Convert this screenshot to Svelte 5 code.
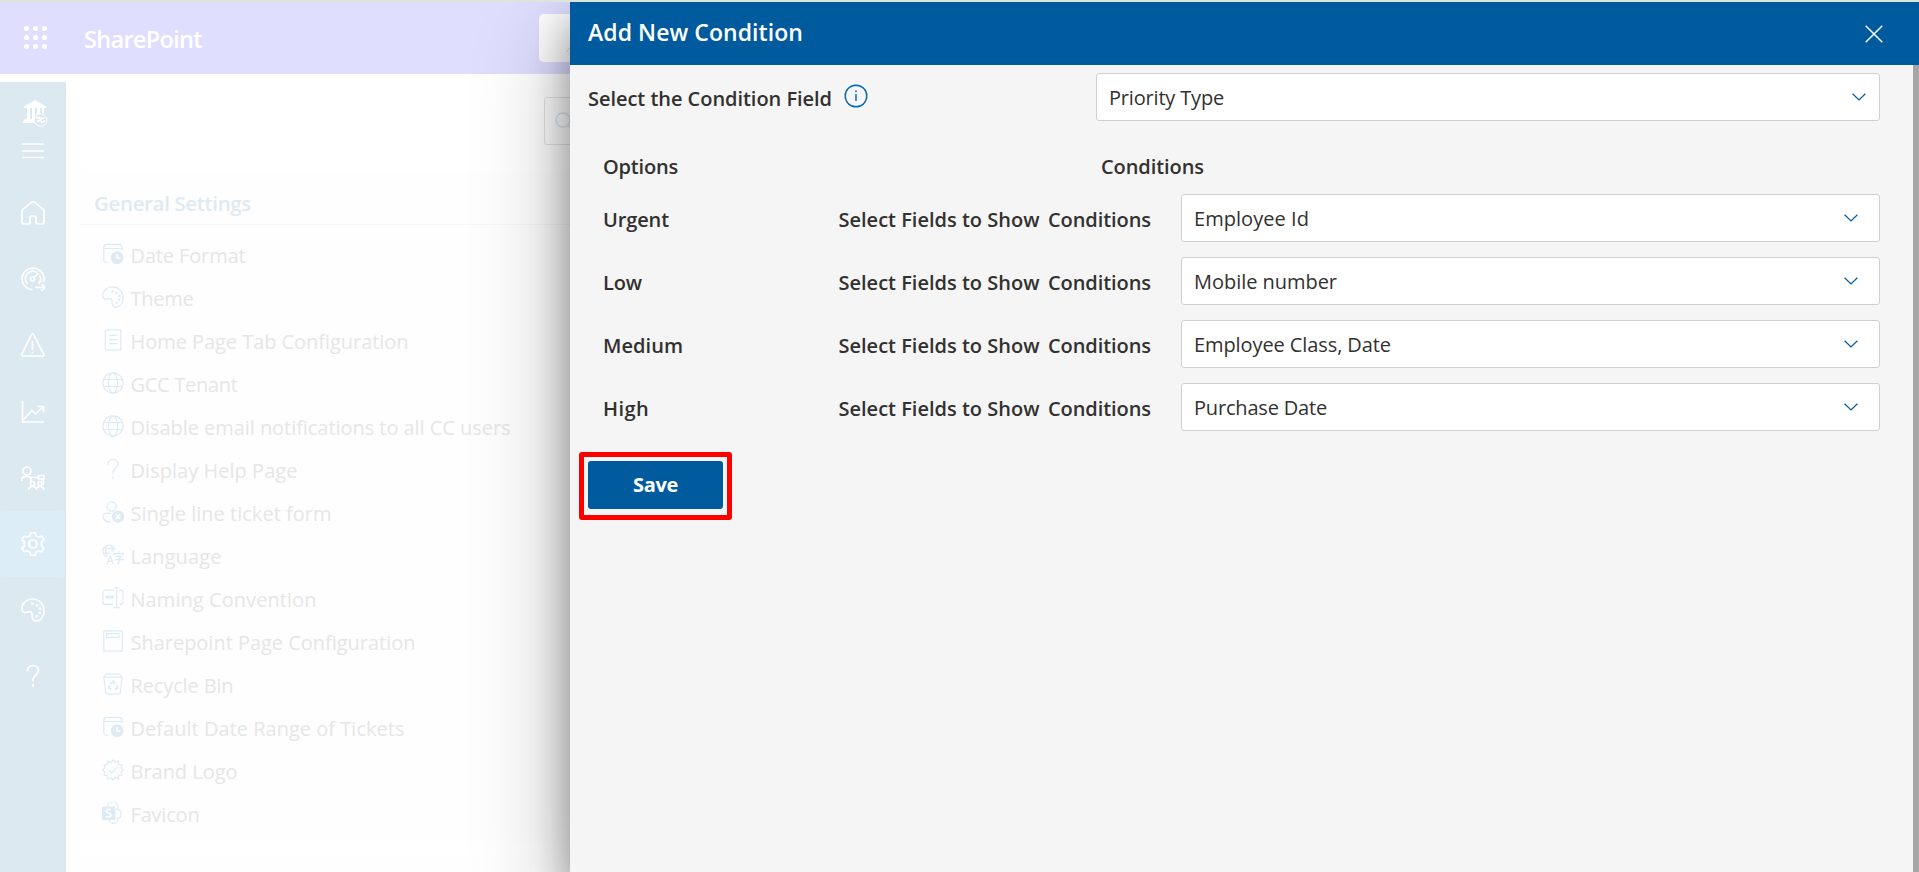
<script>
  function fit(node, width) {
    const chars = node.textContent.length;
    const natural = node.getBoundingClientRect().width;
    node.style.letterSpacing = `${(width - natural) / chars}px`;
  }

  const nav = ['home', 'gauge', 'alert', 'chart', 'people', 'gear', 'palette', 'help'];

  const settings = [
    { icon: 'date', label: 'Date Format', width: 115 },
    { icon: 'palette', label: 'Theme', width: 63 },
    { icon: 'doc', label: 'Home Page Tab Configuration', width: 278 },
    { icon: 'globe', label: 'GCC Tenant', width: 107 },
    { icon: 'globe', label: 'Disable email notifications to all CC users', width: 380 },
    { icon: 'help', label: 'Display Help Page', width: 167 },
    { icon: 'userx', label: 'Single line ticket form', width: 201 },
    { icon: 'lang', label: 'Language', width: 91 },
    { icon: 'rename', label: 'Naming Convention', width: 186 },
    { icon: 'page', label: 'Sharepoint Page Configuration', width: 285 },
    { icon: 'bin', label: 'Recycle Bin', width: 103 },
    { icon: 'date', label: 'Default Date Range of Tickets', width: 274 },
    { icon: 'badge', label: 'Brand Logo', width: 107 },
    { icon: 'sp', label: 'Favicon', width: 69 }
  ];

  const rows = [
    { name: 'Urgent', nw: 66, value: 'Employee Id', vw: 115 },
    { name: 'Low', nw: 39, value: 'Mobile number', vw: 143 },
    { name: 'Medium', nw: 80, value: 'Employee Class, Date', vw: 197 },
    { name: 'High', nw: 46, value: 'Purchase Date', vw: 133 }
  ];
</script>

{#snippet icon(name, size, stroke)}
  <svg class="icon" width={size} height={size} viewBox="0 0 24 24" fill="none" stroke="currentColor" stroke-width={stroke} stroke-linejoin="round">
    {#if name === 'home'}
      <path d="M1 10.5Q1 9.3 2 8.4L10.3 1.4Q12 .2 13.700 1.4L22 8.400Q23 9.300 23 10.500V21Q23 23 21 23H16.500Q15 23 15 21.500V16Q15 15 14 15H10Q9 15 9 16V21.500Q9 23 7.500 23H3Q1 23 1 21Z" />
    {:else if name === 'gauge'}
      <path d="M11.500 22.500A11 10.700 0 1 1 22.500 15M6.500 17A7.500 7.500 0 0 1 16 5.500M18.500 8.500A7.500 7.500 0 0 1 17.500 17M13 10.500L17.500 6M14 20.300H24M20.500 16.800L24 20.300L20.500 23.800" />
      <circle cx="11.500" cy="12" r="2" />
    {:else if name === 'alert'}
      <path d="M10.400 1.800Q11.500 0 12.600 1.800L22.700 21Q23.500 23 21.500 23H2Q0 23 .8 21ZM11.500 8V17M11.500 18.500V20.500" />
    {:else if name === 'chart'}
      <path d="M1.500 1V22H23M2 20L11 10.500L14.500 14L22 7M16.500 6.500H22.500V12" />
    {:else if name === 'people'}
      <circle cx="6" cy="5" r="4" />
      <path d="M.8 15V13Q1 10.300 6 10.300Q8.500 10.300 9.500 11.500M10 16V11.500H17M17.500 9.500H23V13H17.500ZM22.500 13V19" />
      <circle cx="11.500" cy="17.500" r="2" /><circle cx="19" cy="17.500" r="2" />
      <path d="M7.500 24Q8 20.500 11.500 20.500T15.300 24Q15.500 20.500 19 20.500T23 24" />
    {:else if name === 'gear'}
      <path d="M9.300 3.800L9.900 1Q12 .3 14.100 1L14.700 3.800L16.900 5.100L19.700 4.200Q21.300 5.700 21.900 7.900L19.800 9.900V14.100L21.900 16.100Q21.300 18.300 19.700 19.800L16.900 18.900L14.700 20.200L14.100 23Q12 23.700 9.900 23L9.300 20.200L7.100 18.900L4.300 19.800Q2.700 18.300 2.100 16.100L4.200 14.100V9.900L2.100 7.900Q2.700 5.700 4.300 4.200L7.100 5.100Z" transform="translate(12 12) scale(1.1 1) translate(-12 -12)" />
      <circle cx="12" cy="12" r="4" />
    {:else if name === 'palette'}
      <path d="M1 12C-.5 7 5 1 11.500 1C18 1 23 6 23 12.500C23 19 19.500 23 15.500 23C11.500 23 11 19.500 11 16.500C11 13.500 9 13 7 14C4.500 15.200 2 15 1 12Z" />
      <g fill="currentColor" stroke="none"><circle cx="11.500" cy="5.700" r="1.400" /><circle cx="16" cy="7.300" r="1.400" /><circle cx="19" cy="10.700" r="1.400" /><circle cx="18.700" cy="15" r="1.400" /><circle cx="15.700" cy="18.300" r="1.400" /></g>
    {:else if name === 'help'}
      <path d="M6.500 7.500C6 4 8.500 1.500 12 1.500C15.500 1.500 17.800 4 17.500 7C17.200 10 12 12 12 15.500V17.500M12 20V23" />
    {:else if name === 'date'}
      <path d="M7.500 21H5Q2 21 2 18V5Q2 1.500 5 1.500H18Q22 1.500 22 5V8M2 6H22" />
      <circle cx="16.500" cy="16" r="7" fill="currentColor" stroke="none" />
      <path d="M16.500 11.800V16.500H19.800" class="cut" />
    {:else if name === 'doc'}
      <rect x="3.500" y="1" width="17" height="22" rx="1.500" />
      <path d="M7.500 7H16.500M7.500 11.500H16.500M7.500 16H16.500" />
    {:else if name === 'globe'}
      <circle cx="12" cy="12" r="11" /><ellipse cx="12" cy="12" rx="5" ry="11" /><path d="M2 8.200H22M2 15.800H22" />
    {:else if name === 'userx'}
      <circle cx="10.500" cy="6" r="5" />
      <path d="M10 13.500H4Q1 13.500 1 16.500Q1.500 23 9.500 23" />
      <circle cx="17.500" cy="17" r="6.700" fill="currentColor" stroke="none" />
      <path d="M15 14.500L20 19.500M20 14.500L15 19.500" class="cut" />
    {:else if name === 'lang'}
      <path d="M6 14A6.500 6.500 0 1 1 14 7M1 5H14M1 10H9M5 1.500Q2.500 7.500 5.500 14M10 1.500Q11.500 5 11 8.500M5.500 22L9 13L12.500 22M7 19H11M18.500 8V10M13.500 12.500V10.500H23V12.500M15.500 13.500H21L18.500 16V20Q18.500 21.500 16.500 21M13.500 17H24" />
    {:else if name === 'rename'}
      <path d="M13 3.500H4Q1 3.500 1 6.500V16Q1 19 4 19H13M19 3.500H20Q23 3.500 23 6.500V16Q23 19 20 19H19M16 1V22M12.500 .8H19.500M12.500 22.500H19.500" />
      <rect x="4" y="9.500" width="9" height="3" fill="currentColor" stroke="none" />
    {:else if name === 'page'}
      <rect x="2" y="1" width="20" height="22" /><rect x="5" y="4" width="13.500" height="4" />
    {:else if name === 'bin'}
      <path d="M2 4.500L5 1H19L22 4.500M2 4.500H22L20 21Q19.800 23 18 23H6Q4.200 23 4 21Z" />
      <path d="M9.500 12L11.800 9L14.200 12M16 13.500L17 16.500L14 17.800M10.500 17.800L7.500 16.500L8.500 13.500" stroke-width="2" />
    {:else if name === 'badge'}
      <path d="M12 1L14.500 3.700L17.700 2.100L18.200 5.800L21.900 6.300L20.700 9.500L23.300 12L20.700 14.500L21.900 17.700L18.200 18.200L17.700 21.900L14.500 20.300L12 23L9.500 20.300L6.300 21.900L5.800 18.200L2.100 17.700L3.300 14.500L.7 12L3.300 9.500L2.100 6.300L5.800 5.800L6.300 2.100L9.500 3.700ZM7.500 12.300L10.500 15.200L16.500 9.200" />
    {:else if name === 'sp'}
      <path d="M5.500 4.500A6 6 0 0 1 17.500 7M15.500 7.500A5.200 5.200 0 1 1 15.500 18.300M8 19A4.500 4.500 0 0 0 17 19" />
      <rect x="0" y="5" width="14.500" height="14.500" rx="1" fill="currentColor" stroke="none" />
      <path d="M10 8.500Q4.500 7 4.700 10Q5 11.500 7.300 12T9.800 14.500Q9.500 17 4.500 15.800" class="cut" />
    {/if}
  </svg>
{/snippet}

{#snippet chevron()}
  <svg class="chevron" width="14" height="8" viewBox="0 0 14 8" fill="none" stroke="#005a9e" stroke-width="1.200"><path d="M.6 .7L7 7L13.400 .7" /></svg>
{/snippet}

<div class="screen">
  <header class="suite">
    <svg class="waffle" width="24" height="24" viewBox="0 0 24 24" fill="#fff">
      {#each [2.500, 11.500, 20.500] as y}
        {#each [2.500, 11.500, 20.500] as x}<circle cx={x} cy={y} r="2.500" />{/each}
      {/each}
    </svg>
    <span class="brand"><span use:fit={118}>SharePoint</span></span>
    <div class="suite-search"><svg width="12" height="12" viewBox="0 0 12 12" stroke="#ddd"><path d="M0 9L9 0" /></svg></div>
  </header>

  <div class="body">
    <nav>
      <svg class="logo" width="26" height="28" viewBox="0 0 26 28" fill="#fff">
        <path d="M1 6.500L12 0L23 6.500V8H1ZM4 8H7V19H4ZM9 8H12V19H9ZM14 8H17V14L14 17ZM19 8H21V13H19ZM2 19H12L13 23H0V21Z" />
        <circle cx="17.500" cy="20" r="6.300" fill="#dce9f1" stroke="#fff" />
        <path d="M13 18L16 17.500L18 19L21.500 17.500M14 21.500L17 20.500L19 22.500L22 21" stroke="#fff" stroke-width="1.700" fill="none" />
      </svg>
      <svg class="burger" width="22" height="16" viewBox="0 0 22 16" stroke="#fff" stroke-width="1.500"><path d="M0 1H22M0 8H22M0 14.500H22" /></svg>
      {#each nav as name}
        <div class="nav-item" class:active={name === 'gear'}>{@render icon(name, 24, 1.7)}</div>
      {/each}
    </nav>

    <main>
      <div class="filter">
        <svg width="20" height="20" viewBox="0 0 20 20" fill="none" stroke="#dbe5ec" stroke-width="1.400"><circle cx="8" cy="8" r="7" /><path d="M13 13L19 19" /></svg>
      </div>
      <section class="card">
        <h2><span use:fit={157}>General Settings</span></h2>
        <ul>
          {#each settings as s}
            <li>{@render icon(s.icon, 22, 1.3)}<span class="fit" use:fit={s.width}>{s.label}</span></li>
          {/each}
        </ul>
      </section>
      <section class="card next"></section>
    </main>
  </div>

  <aside>
    <div class="panel-head">
      <h1><span use:fit={215}>Add New Condition</span></h1>
      <svg width="18" height="18" viewBox="0 0 18 18" stroke="#fff" stroke-width="1.500"><path d="M.7 .7L17.300 17.300M17.300 .7L.7 17.300" /></svg>
    </div>
    <div class="panel-body">
      <div class="field">
        <div class="label">
          <span use:fit={244}>Select the Condition Field</span>
          <svg width="24" height="24" viewBox="0 0 24 24" fill="none" stroke="#0067b0" stroke-width="1.400"><circle cx="12" cy="12" r="10.800" /><path d="M12 10V17M12 6.500V8.300" /></svg>
        </div>
        <div class="select"><span use:fit={115}>Priority Type</span>{@render chevron()}</div>
      </div>
      <div class="heads">
        <span class="opt"><span use:fit={75}>Options</span></span>
        <span use:fit={103}>Conditions</span>
      </div>
      {#each rows as r}
        <div class="row">
          <span class="opt"><span use:fit={r.nw}>{r.name}</span></span>
          <span class="show"><span use:fit={201}>Select Fields to Show</span></span>
          <span class="cond"><span use:fit={103}>Conditions</span></span>
          <div class="select multi"><span use:fit={r.vw}>{r.value}</span>{@render chevron()}</div>
        </div>
      {/each}
      <div class="highlight"><button><span use:fit={45}>Save</span></button></div>
    </div>
    <div class="scroll"></div>
  </aside>
</div>

<style>
  :global(body) { background: #fff; overflow: hidden; }
  * { box-sizing: border-box; }
  .screen {
    position: relative;
    height: 872px;
    overflow: hidden;
    border-top: 2px solid #dde4d9;
    font: 400 20px/28px "Open Sans", "Noto Sans", sans-serif;
    color: #323130;
    white-space: nowrap;
  }
  svg { display: block; flex: none; }
  span { display: inline-block; }

  .suite { display: flex; align-items: center; height: 72px; background: #dfdeff; }
  .waffle { margin: 0 0 0 24px; }
  .brand { width: 491px; padding-left: 36px; color: #fff; font-size: 23.500px; font-weight: 600; margin-top: 1px; }
  .suite-search { flex: 1; height: 48px; border-radius: 5px; background: #fff; padding: 29px 0 0 27px; }

  .body { display: flex; height: 798px; }
  nav { width: 66px; margin-top: 8px; background: #dce9f1; color: #fff; border-right: 1px solid #d7e5ee; }
  .logo { margin: 18px 0 0 23px; }
  .burger { margin: 15px 0 0 22px; }
  .nav-item { display: flex; height: 66.200px; padding: 0 0 0 21px; align-items: center; }
  .burger + .nav-item { margin-top: 21px; }
  .active { background: #dcedf8; border-radius: 4px; }

  main { flex: 1; padding: 23px 0 0 14px; }
  .filter { width: 400px; height: 48px; margin-left: 464px; padding: 14px 0 0 10px; border: 1px solid #e4e4e4; border-radius: 3px; }
  .card { margin-top: 28px; height: 668px; background: #fefefe; }
  .next { margin-top: 16px; height: 30px; }
  h2 { margin: 0; height: 52px; padding: 16px 0 0 14px; border-bottom: 1px solid #f5f6f7; font-size: 20.500px; line-height: 28px; font-weight: 600; color: #dfeaf2; }
  ul { margin: 0; padding: 9px 0 0 22px; list-style: none; }
  li { display: flex; align-items: center; height: 43.050px; gap: 6.500px; color: #deebf4; }
  li :global(.icon) { margin-top: -4px; }
  li .fit { color: #e6e6e6; }
  .cut { stroke: #fff; stroke-width: 1.800; fill: none; }

  aside {
    position: absolute;
    inset: 0 0 0 570px;
    background: #f5f5f5;
    box-shadow: 0 32px 90px rgba(0, 0, 0, .3), 0 20px 36px rgba(0, 0, 0, .33);
    display: grid;
    grid-template: 63px 1fr / 1fr 6px;
  }
  .panel-head { grid-column: 1 / 3; background: #005a9e; color: #fff; display: flex; justify-content: space-between; align-items: center; padding: 0 36px 0 18px; }
  .panel-head svg { margin-top: 1px; }
  h1 { margin: 0 0 3px; font-size: 23px; font-weight: 650; line-height: 30px; }
  .scroll { background: #a6a6a6; }
  .panel-body { padding: 8px 33px 0 18px; }
  .field { display: flex; }
  .label { display: flex; width: 508px; gap: 12px; padding-top: 11px; }
  .label, .heads, .opt, .show, .cond { font-weight: 560; }
  .label > span { margin-top: 1px; }
  .select { display: flex; justify-content: space-between; flex: 1; height: 48px; padding: 10px 13px 0 12px; background: #fff; border: 1px solid #d0d0d0; border-radius: 3px; }
  .select :global(.chevron) { margin-top: 9px; }
  .multi { padding-right: 21px; }
  .heads { display: flex; padding: 32px 0 13px 15px; }
  .heads .opt { width: 498px; }
  .row { display: flex; height: 48px; margin-bottom: 15px; padding-left: 15px; }
  .row > span { padding-top: 12px; }
  .row .opt { width: 235.500px; }
  .show { width: 209.500px; }
  .cond { width: 133px; }
  .highlight { width: 153px; height: 68px; margin: 21px 0 0 -9px; border: 5px solid #f00; border-radius: 3px; padding: 4px 0 0 4px; }
  button { display: block; width: 135px; height: 48px; padding: 0; border: 0; border-radius: 3px; background: #005a9e; color: #fff; font: inherit; font-weight: 700; }
</style>
